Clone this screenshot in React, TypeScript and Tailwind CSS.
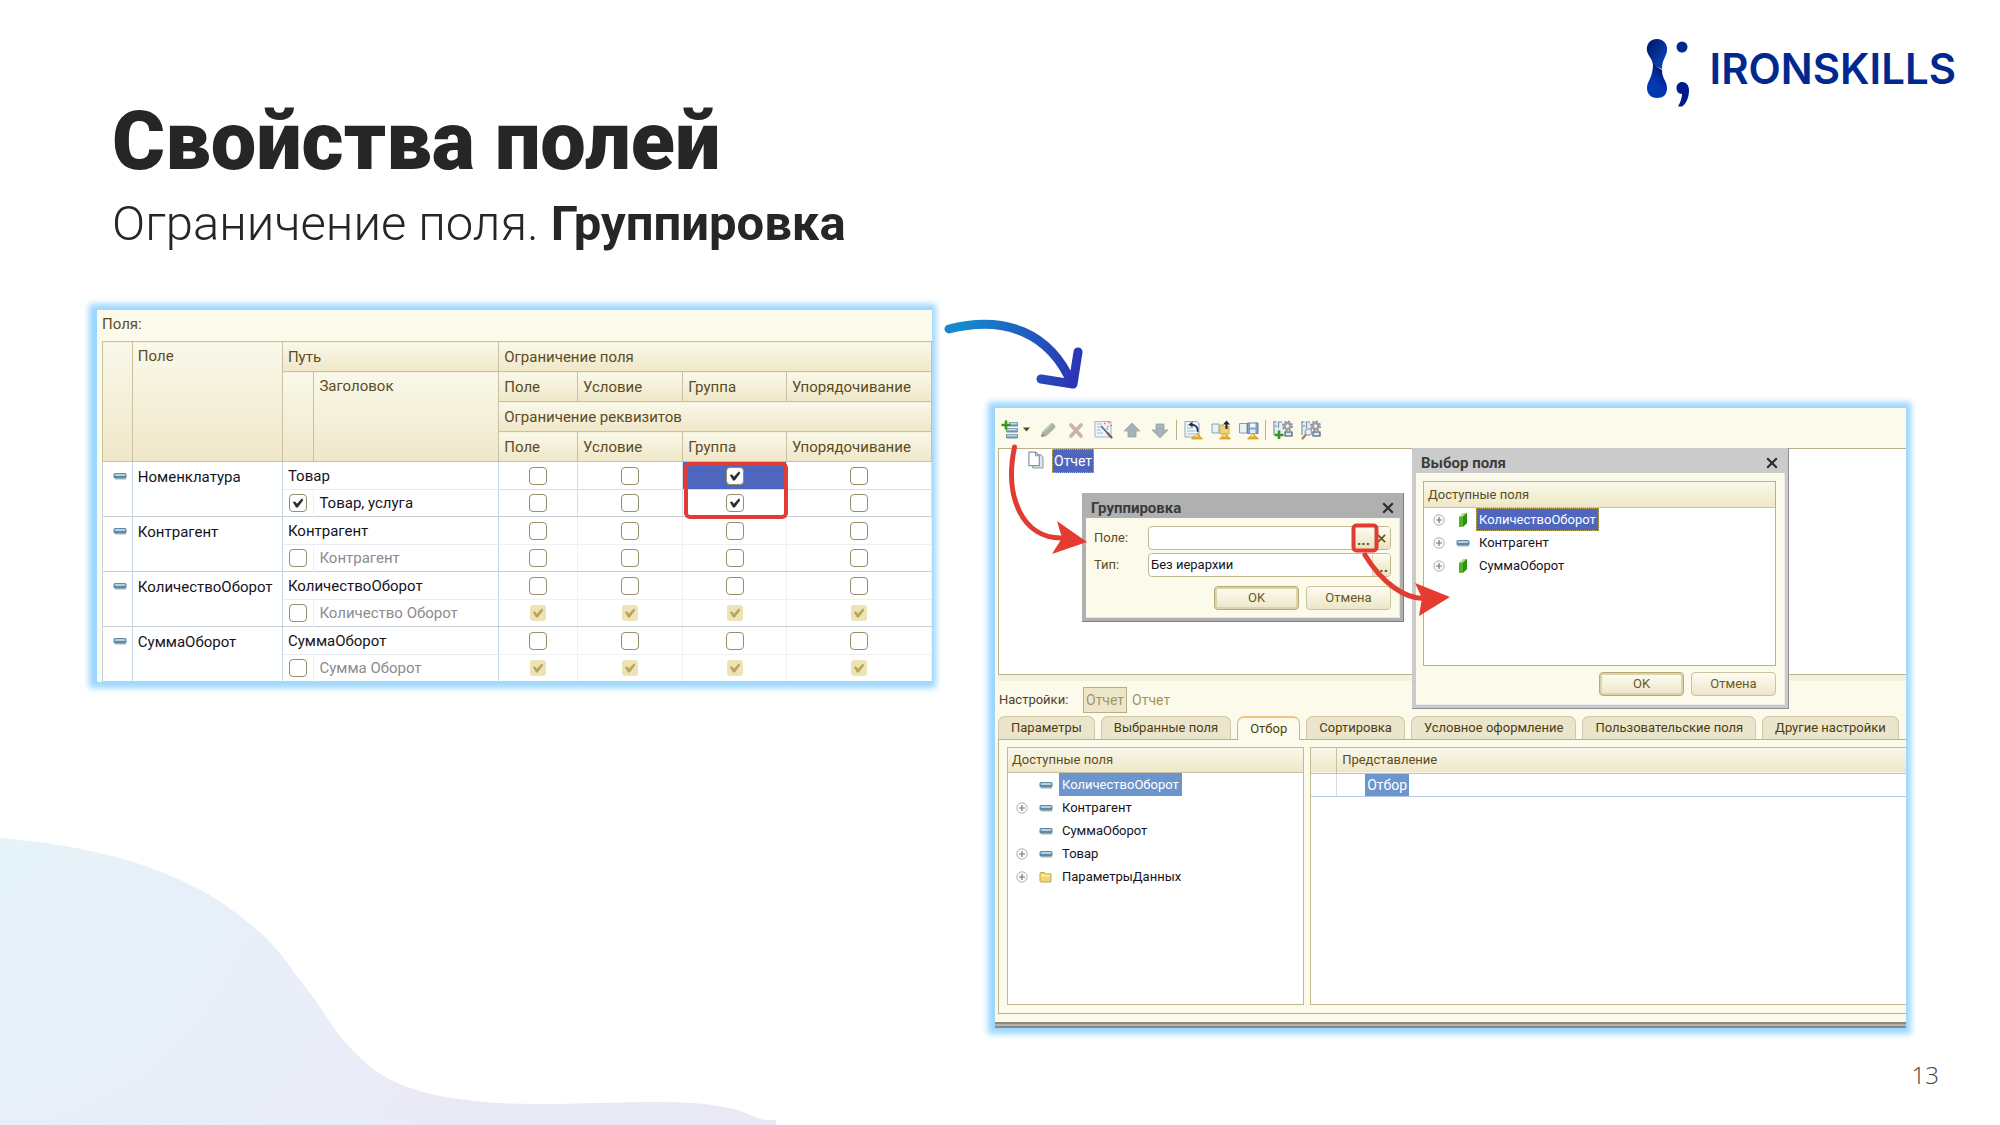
import type { ReactNode } from "react";

const HEAD = "bg-linear-to-b from-[#f9f8ea] to-[#efe7c8]";

/* ---------- small shared pieces ---------- */

function Minus() {
  return (
    <svg viewBox="0 0 14 8" className="h-2 w-3.5 shrink-0" aria-hidden="true">
      <rect x="0.5" y="1" width="13" height="5.5" rx="1.6" fill="#5f8aa6" />
      <rect x="1.6" y="1.9" width="10.8" height="2" rx="1" fill="#b4d0e2" />
      <rect x="2" y="6.4" width="11" height="1" rx="0.5" fill="#47606f" opacity="0.5" />
    </svg>
  );
}

function Resource() {
  return (
    <svg viewBox="0 0 14 16" className="h-4 w-3.5 shrink-0" aria-hidden="true">
      <path d="M3 5 L7 1.5 L11 1 V11 L7 14.8 L3 15 Z" fill="#4fb32a" />
      <path d="M3 5 L7 4.6 L11 1 L7 1.5 Z" fill="#a6e487" />
      <path d="M7 4.6 L11 1 V11 L7 14.8 Z" fill="#2f8f14" />
    </svg>
  );
}

function Folder() {
  return (
    <svg viewBox="0 0 14 12" className="h-3 w-3.5 shrink-0" aria-hidden="true">
      <path d="M1.5 1.5 H5.5 L7 3 H12 V10.5 Q12 11 11.5 11 H2 Q1 11 1 10 V2 Z" fill="#f3d777" stroke="#b99b3e" strokeWidth="0.9" />
      <path d="M2 4.5 H11" stroke="#fdf2bd" strokeWidth="1.2" />
    </svg>
  );
}

function Plus() {
  return (
    <svg viewBox="0 0 12 12" className="size-3 shrink-0" aria-hidden="true">
      <circle cx="6" cy="6" r="5.2" fill="#fbfbfb" stroke="#a9a9a9" strokeWidth="0.9" />
      <path d="M3 6 H9 M6 3 V9" stroke="#777" strokeWidth="1.2" />
    </svg>
  );
}

function Cross({ className }: { className: string }) {
  return (
    <svg viewBox="0 0 12 12" className={className} aria-hidden="true">
      <path d="M1.2 1.2 L10.8 10.8 M10.8 1.2 L1.2 10.8" stroke="currentColor" strokeWidth="2.2" fill="none" />
    </svg>
  );
}

function Check({ state, label }: { state: "off" | "on" | "locked"; label: string }) {
  return (
    <span className="relative inline-grid size-[18px] place-items-center align-middle">
      {state === "locked" ? (
        <input type="checkbox" aria-label={label} defaultChecked disabled className="size-4 appearance-none rounded-[3px] bg-[#eee3b4]" />
      ) : (
        <input
          type="checkbox"
          aria-label={label}
          defaultChecked={state === "on"}
          className="size-[18px] appearance-none rounded-[4px] border border-[#968e6a] bg-white"
        />
      )}
      {state !== "off" && (
        <svg viewBox="0 0 12 12" className="pointer-events-none absolute inset-[3px] size-3" aria-hidden="true">
          <path
            d="M0.8 5 L3 4.400 L5 6.800 L10 1.2 L11.200 3.200 L5.8 10.400 L4 10.400 Z"
            className={state === "on" ? "fill-[#2c2c34]" : "fill-[#b5a55f]"}
          />
        </svg>
      )}
    </span>
  );
}

/* ---------- header ---------- */

function Logo() {
  return (
    <div className="flex items-start gap-5 text-[#00298f]">
      <svg viewBox="0 0 46 70" className="h-[70px] w-[46px]" aria-hidden="true">
        <defs>
          <linearGradient id="logoTop" x1="0" y1="0" x2="1" y2="1">
            <stop offset="0.2" stopColor="#021f78" />
            <stop offset="1" stopColor="#0a4cc4" />
          </linearGradient>
          <linearGradient id="logoBottom" x1="0.8" y1="0" x2="0.3" y2="0.8">
            <stop offset="0" stopColor="#020f6b" />
            <stop offset="0.7" stopColor="#0238b0" />
          </linearGradient>
        </defs>
        <path d="M13 1 C20 1 24 7 23 13 C22 19 18 22 18 31 L9 27 C8 20 4 18 3 13 C2 6 6 1 13 1 Z" fill="url(#logoTop)" />
        <path d="M9 26 L18 32 C18 41 23 43 23 50 C23 57 19 60 13 60 C7 60 3 56 3 50 C3 43 9 40 9 26 Z" fill="url(#logoBottom)" />
        <circle cx="38" cy="9" r="5.5" fill="#00298f" />
        <path d="M38 44 C42 44 45 47 45 52 C45 60 42 66 38 68.500 L34 68.500 C36.500 64 38 60 38 56 C34.500 56 32.500 53 32.500 50 C32.500 46.500 35 44 38 44 Z" fill="#001a8c" />
      </svg>
      <span className="pt-2.5 font-['Inter'] text-[42px] leading-[42px] font-semibold">IRONSKILLS</span>
    </div>
  );
}

/* ---------- left window ---------- */

type State = "off" | "on" | "locked";
const records: { name: string; path: string; title: string; titled: boolean; upper: State[]; lower: State[] }[] = [
  { name: "Номенклатура", path: "Товар", title: "Товар, услуга", titled: true, upper: ["off", "off", "on", "off"], lower: ["off", "off", "on", "off"] },
  { name: "Контрагент", path: "Контрагент", title: "Контрагент", titled: false, upper: ["off", "off", "off", "off"], lower: ["off", "off", "off", "off"] },
  { name: "КоличествоОборот", path: "КоличествоОборот", title: "Количество Оборот", titled: false, upper: ["off", "off", "off", "off"], lower: ["locked", "locked", "locked", "locked"] },
  { name: "СуммаОборот", path: "СуммаОборот", title: "Сумма Оборот", titled: false, upper: ["off", "off", "off", "off"], lower: ["locked", "locked", "locked", "locked"] },
];
const limits = ["Поле", "Условие", "Группа", "Упорядочивание"];

function LimitHeads() {
  return (
    <>
      {limits.map((l) => (
        <th key={l} className={`h-[30px] border border-[#c9c19f] pl-[5px] text-left font-normal whitespace-nowrap ${HEAD}`}>
          {l}
        </th>
      ))}
    </>
  );
}

function FieldsWindow() {
  const head = `h-[30px] border border-[#c9c19f] text-left font-normal ${HEAD}`;
  return (
    <section className="relative bg-[#fcfaea] pl-[5px] text-[15px] leading-5 text-[#5b4c22] shadow-[-2px_0_6px_6px_#9bd7ff]">
      <p className="pt-1 pb-[7px]">Поля:</p>
      <table className="w-full table-fixed border-collapse bg-white">
        <colgroup>
          <col className="w-[3.6%]" />
          <col className="w-[18.100%]" />
          <col className="w-[3.8%]" />
          <col className="w-[22.300%]" />
          <col className="w-[9.500%]" />
          <col className="w-[12.700%]" />
          <col className="w-[12.500%]" />
          <col className="w-[17.500%]" />
        </colgroup>
        <thead>
          <tr>
            <th rowSpan={4} className={head} aria-label="Значок" />
            <th rowSpan={4} className={`${head} pt-1 pl-[5px] align-top`}>Поле</th>
            <th colSpan={2} className={`${head} pl-[5px]`}>Путь</th>
            <th colSpan={4} className={`${head} pl-[5px]`}>Ограничение поля</th>
          </tr>
          <tr>
            <th rowSpan={3} className={head} aria-label="Автозаголовок" />
            <th rowSpan={3} className={`${head} pt-1 pl-[5px] align-top`}>Заголовок</th>
            <LimitHeads />
          </tr>
          <tr>
            <th colSpan={4} className={`${head} pl-[5px]`}>Ограничение реквизитов</th>
          </tr>
          <tr>
            <LimitHeads />
          </tr>
        </thead>
        {records.map((r, i) => (
          <tbody key={r.name} className="border-b border-[#c5ced6] text-[#14141e]">
            <tr>
              <td rowSpan={2} className="h-7 border-x border-[#c5d3e2] pt-2.5 pl-2.5 align-top">
                <Minus />
              </td>
              <td rowSpan={2} className="border-x border-[#c5d3e2] pt-[5px] pl-[5px] align-top">{r.name}</td>
              <td colSpan={2} className="h-7 border-x border-b border-[#c5d3e2] border-b-[#e6ecf2] pl-[5px]">{r.path}</td>
              {r.upper.map((s, k) => (
                <td
                  key={k}
                  className={`h-7 border p-0 text-center leading-none ${i === 0 ? "border-[#cfdff0]" : "border-[#eef0f2]"} ${i === 0 && k === 2 ? "bg-[#4f66bf]" : ""}`}
                >
                  <Check state={s} label={`${r.name}: ${limits[k]}`} />
                </td>
              ))}
            </tr>
            <tr>
              <td className="h-[27px] p-0 text-center leading-none">
                <Check state={r.titled ? "on" : "off"} label={`${r.name}: заголовок`} />
              </td>
              <td className={`border-x border-[#c5d3e2] border-l-[#eef0f2] pl-[5px] whitespace-nowrap ${r.titled ? "" : "text-[#8b8b90]"}`}>{r.title}</td>
              {r.lower.map((s, k) => (
                <td key={k} className={`h-[27px] border p-0 text-center leading-none ${i === 0 ? "border-[#cfdff0]" : "border-[#eef0f2]"} border-b-[#c5ced6]`}>
                  <Check state={s} label={`${r.name}, реквизиты: ${limits[k]}`} />
                </td>
              ))}
            </tr>
          </tbody>
        ))}
      </table>
      <div className="pointer-events-none absolute top-[152px] left-[70.300%] h-[57px] w-[12.500%] rounded-md border-4 border-[#e03c35]" />
    </section>
  );
}

/* ---------- right window ---------- */

function Tool({ label, wide, children }: { label: string; wide?: boolean; children: ReactNode }) {
  return (
    <button type="button" aria-label={label} className={wide ? "h-5 w-[29px]" : "size-5"}>
      {children}
    </button>
  );
}

const svg20 = "size-5";

function Sheet() {
  return (
    <>
      <path d="M2 1.500 H14 L16 3.500 V17 H2 Z" fill="#f4f8fb" stroke="#8fa6b8" strokeWidth="1" />
      <path d="M4 5 H9 M4 8 H10 M4 11 H12 M4 14 H12" stroke="#9fb4c4" strokeWidth="1" />
    </>
  );
}

function Pyramid() {
  return (
    <>
      <path d="M8.500 19 L14 13 L19.500 19 Z" fill="#e3b12c" stroke="#c79017" strokeWidth="0.6" />
      <path d="M11 16.500 L14 13.500 L15 16.500 Z" fill="#f9e08a" />
    </>
  );
}

function Gear() {
  return (
    <g>
      <circle cx="14.500" cy="6" r="4.600" fill="none" stroke="#8b8f98" strokeWidth="1.800" strokeDasharray="2 1.600" />
      <circle cx="14.500" cy="6" r="2.900" fill="none" stroke="#9a9ea6" strokeWidth="2.600" />
      <circle cx="14.500" cy="6" r="1.500" fill="#f2f4f6" />
    </g>
  );
}

function Grid() {
  return (
    <>
      <rect x="0.800" y="1" width="9" height="13" fill="#e6eff6" />
      <path d="M1 1 V15 M5 2 H9 M1 2 H3.500 M5.500 2 V8 M3 5 V7" stroke="#7d94a6" strokeWidth="1.200" fill="none" />
      <rect x="12" y="12" width="7" height="4" fill="#dbe7f1" stroke="#4b6478" strokeWidth="1.200" />
    </>
  );
}

function Toolbar() {
  return (
    <div className="flex h-10 items-center gap-2 pt-1 pl-1.5">
      <Tool label="Добавить" wide>
        <svg viewBox="0 0 29 20" className="h-5 w-[29px]">
          {[2, 8, 14].map((y) => (
            <g key={y}>
              <rect x={y === 2 ? 8 : 5} y={y} width={y === 2 ? 9 : 12} height="4.500" rx="1" fill="#6f93a8" />
              <rect x={y === 2 ? 9 : 6} y={y + 0.8} width={y === 2 ? 7 : 10} height="1.600" rx="0.700" fill="#c4dae6" />
            </g>
          ))}
          <path d="M5 0.500 V9.500 M0.500 5 H9.500" stroke="#2f9a1c" strokeWidth="2.600" />
          <path d="M22 7.500 H29 L25.500 11.500 Z" fill="#5c4520" />
        </svg>
      </Tool>
      <Tool label="Изменить">
        <svg viewBox="0 0 20 20" className={svg20}>
          <path d="M3 17 L4.500 11.500 L12.500 3.500 Q14 2.500 15.500 4 L17 5.500 Q18 7 17 8 L8.500 16 Z" fill="#a9b5a2" />
          <path d="M5 12 L13 4.500" stroke="#c6cec0" strokeWidth="1.500" />
          <path d="M3 17 L4.200 13 L7 16 Z" fill="#8a8f80" />
        </svg>
      </Tool>
      <Tool label="Удалить">
        <svg viewBox="0 0 20 20" className={svg20}>
          <path d="M5 5 L15 16 M15 5 L5 16" stroke="#c9b1ad" strokeWidth="3.600" strokeLinecap="round" />
        </svg>
      </Tool>
      <Tool label="Конструктор">
        <svg viewBox="0 0 20 20" className={svg20}>
          <path d="M1 1.500 H17 V17 H1 Z" fill="#eff5fa" stroke="#a3b7c6" />
          <path d="M3 4 H8 M3 7 H6 M3 10 H7 M3 13 H9" stroke="#a7bac8" />
          <path d="M7 6 L18 18" stroke="#4a6fa0" strokeWidth="1.800" />
          <path d="M13 12.500 L18 18" stroke="#8c5c40" strokeWidth="2" />
          <path d="M10 3.500 H11.500 M14 2.500 H15.500 M13 6.500 H14.500 M16.500 5.500 H18 M12.500 9 H14" stroke="#ec6b5a" strokeWidth="1.500" />
        </svg>
      </Tool>
      <Tool label="Вверх">
        <svg viewBox="0 0 20 20" className={svg20}>
          <path d="M10 3 L18 11 H14 V17 H6 V11 H2 Z" fill="#a6b2b9" stroke="#95a3ab" strokeWidth="0.800" />
        </svg>
      </Tool>
      <Tool label="Вниз">
        <svg viewBox="0 0 20 20" className={svg20}>
          <path d="M10 18 L18 10 H14 V4 H6 V10 H2 Z" fill="#a6b2b9" stroke="#95a3ab" strokeWidth="0.800" />
        </svg>
      </Tool>
      <span className="-mx-0.5 h-5 w-px bg-[#b9b08c]" />
      <Tool label="Вернуть">
        <svg viewBox="0 0 20 20" className={svg20}>
          <Sheet />
          <path d="M14.500 12 C15.500 7 12 4.500 7.500 4.500" stroke="#1f3a54" strokeWidth="1.800" fill="none" />
          <path d="M5.500 4.500 L9.500 1.500 V7.500 Z" fill="#1f3a54" />
          <Pyramid />
        </svg>
      </Tool>
      <Tool label="Загрузить настройки">
        <svg viewBox="0 0 20 20" className={svg20}>
          <path d="M1 4 H8 V13 H1 Z" fill="#eaf2f8" stroke="#86a0b4" />
          <path d="M9 5 H12 L13 6.500 H18 V14 H9 Z" fill="#efd27a" stroke="#c9a23a" strokeWidth="0.800" />
          <path d="M15.500 9 V3.500" stroke="#17293a" strokeWidth="2" fill="none" />
          <path d="M12 4.500 L15.500 0.500 L19 4.500 Z" fill="#17293a" />
          <Pyramid />
        </svg>
      </Tool>
      <Tool label="Сохранить настройки">
        <svg viewBox="0 0 20 20" className={svg20}>
          <path d="M0.500 3.500 H8 V13 H0.500 Z" fill="#eaf2f8" stroke="#86a0b4" />
          <path d="M8.500 3 H19 V13.500 H8.500 Z" fill="#7ea4c4" stroke="#5c83a5" />
          <rect x="11" y="3.500" width="5.500" height="4" fill="#f3f7fa" />
          <rect x="11" y="9.500" width="5.500" height="4" fill="#dfeaf2" />
          <Pyramid />
        </svg>
      </Tool>
      <span className="-mr-px -ml-0.5 h-5 w-px bg-[#b9b08c]" />
      <Tool label="Новая настройка">
        <svg viewBox="0 0 20 20" className={svg20}>
          <Grid />
          <Gear />
          <path d="M6 10.500 V19 M1.500 15 H10.500" stroke="#2f9a1c" strokeWidth="2.600" />
        </svg>
      </Tool>
      <Tool label="Просмотр настройки">
        <svg viewBox="0 0 20 20" className={svg20}>
          <Grid />
          <Gear />
          <path d="M5 14.500 L1.500 18.500" stroke="#b07a55" strokeWidth="2.200" strokeLinecap="round" />
          <circle cx="7.500" cy="12" r="3.200" fill="#e6f0f7" stroke="#9a9ca6" strokeWidth="1.200" />
        </svg>
      </Tool>
    </div>
  );
}

function TreeItem({ icon, text, expandable, mark }: { icon: ReactNode; text: string; expandable: boolean; mark?: string }) {
  return (
    <li className="flex h-[23px] items-center">
      <span className="flex w-3">{expandable && <Plus />}</span>
      <span className="ml-[11px] flex w-3.5 justify-center">{icon}</span>
      <span className={`ml-1.5 flex h-[23px] items-center px-[3px] ${mark ?? "text-[#14141e]"}`}>{text}</span>
    </li>
  );
}

function DialogButtons() {
  const base = "h-6 w-[85px] rounded-[4px] border text-[13px] text-[#6a5a24] bg-linear-to-b from-[#fdfcf1] to-[#ece6c9]";
  return (
    <div className="flex justify-end gap-[7px]">
      <button type="button" className={`${base} border-[#b5a978] shadow-[inset_0_0_0_2px_#ddd3a8]`}>OK</button>
      <button type="button" className={`${base} border-[#c9c19f]`}>Отмена</button>
    </div>
  );
}

function GroupDialog() {
  const field = "flex h-6 min-w-0 flex-1 overflow-hidden rounded-[4px] border border-[#c3ba92] bg-white";
  const small = "grid w-[18px] shrink-0 place-items-center bg-linear-to-b from-[#fdfcf1] to-[#e9e2c2] text-[#6a5216]";
  return (
    <div role="dialog" aria-label="Группировка" className="absolute top-[85px] left-[87px] w-[322px] border-r border-b border-[#7d7d7d] bg-[#b0b0b0] pr-[3px] pb-[3px] pl-1">
      <div className="flex h-[25px] items-center justify-between pt-1 pr-1.5 pl-[5px]">
        <h3 className="text-[15px] font-bold text-[#3b3b3b]">Группировка</h3>
        <button type="button" aria-label="Закрыть" className="text-[#2e2e2e]"><Cross className="size-3" /></button>
      </div>
      <div className="border-r border-b border-[#e4e4e4] bg-[#fcfaea] px-2 pt-2 pb-[7px]">
        <div className="flex items-center">
          <label htmlFor="group-field" className="w-[54px]">Поле:</label>
          <div className={field}>
            <input id="group-field" className="min-w-0 flex-1 px-1 outline-none" />
            <button type="button" aria-label="Выбрать поле" className={`${small} w-5 border-l border-[#ddd6b4] pt-1 text-[15px] font-bold`}>...</button>
            <button type="button" aria-label="Очистить" className={small}><Cross className="size-[9px]" /></button>
          </div>
        </div>
        <div className="mt-[3px] flex items-center">
          <label htmlFor="group-type" className="w-[54px]">Тип:</label>
          <div className={field}>
            <input id="group-type" defaultValue="Без иерархии" className="min-w-0 flex-1 px-0.5 text-[#14141e] outline-none" />
            <button type="button" aria-label="Выбрать тип" className={`${small} border-l border-[#ddd6b4] pt-1 text-[15px] font-bold`}>...</button>
          </div>
        </div>
        <div className="mt-[9px]">
          <DialogButtons />
        </div>
      </div>
    </div>
  );
}

function FieldDialog() {
  return (
    <div role="dialog" aria-label="Выбор поля" className="absolute top-10 left-[417px] w-[377px] border-r border-b border-[#909090] bg-[#cbcbcb] pr-[3px] pb-[3px] pl-1">
      <div className="flex h-[25px] items-center justify-between pt-1 pr-1 pl-[5px]">
        <h3 className="text-[15px] font-bold text-[#3b3b3b]">Выбор поля</h3>
        <button type="button" aria-label="Закрыть" className="mr-[3px] text-[#2e2e2e]"><Cross className="size-3" /></button>
      </div>
      <div className="border-r border-b border-[#ececec] bg-[#fcfaea] pt-2 pr-2 pb-2 pl-[7px]">
        <div className="mb-1.5 h-[185px] border border-[#b9b08c] bg-white">
          <h4 className={`flex h-[26px] items-center border-b border-[#c9c19f] pl-1 ${HEAD}`}>Доступные поля</h4>
          <ul className="pl-[9px]">
            <TreeItem expandable icon={<Resource />} text="КоличествоОборот" mark="border border-dotted border-[#c9b35a] bg-[#4f66bf] !px-0.5 text-white" />
            <TreeItem expandable icon={<Minus />} text="Контрагент" />
            <TreeItem expandable icon={<Resource />} text="СуммаОборот" />
          </ul>
        </div>
        <DialogButtons />
      </div>
    </div>
  );
}

const tabs = ["Параметры", "Выбранные поля", "Отбор", "Сортировка", "Условное оформление", "Пользовательские поля", "Другие настройки"];

function SettingsWindow() {
  return (
    <section className="relative bg-[#fcfaea] text-[13px] leading-4 text-[#5b4c22] shadow-[-1px_0_6px_6px_#9bd7ff]">
      <Toolbar />
      <div className="ml-[3px] h-[227px] border-y border-l border-[#b9b08c] bg-white">
        <div className="flex items-start pl-[29px]">
          <svg viewBox="0 0 17 20" className="mt-0.5 h-[19px] w-4" aria-hidden="true">
            <path d="M5 4 H14 L16 7 V18 H5 Z" fill="#dde6ec" stroke="#8296a4" />
            <path d="M1 1 H8 L12 5 V15.500 H1 Z" fill="#fff" stroke="#8296a4" strokeWidth="1.300" />
            <path d="M8 1 V5 H12" fill="none" stroke="#8296a4" strokeWidth="1.200" />
          </svg>
          <span className="ml-2 border border-dotted border-[#c9b35a] bg-[#4f66bf] px-px py-0.5 text-[14px] leading-[18px] text-white">Отчет</span>
        </div>
      </div>
      <div className="ml-[3px] h-1.5 bg-[#f5f1df]" />
      <div className="flex h-[33px] items-center pt-1 pl-1 text-[#4c4330]">
        <span className="w-[84px]">Настройки:</span>
        <button type="button" className="h-[26px] border border-[#b9ae84] bg-[#ece6cb] px-0.5 text-[14px] text-[#a39662]">Отчет</button>
        <span className="ml-[5px] text-[14px] text-[#a39662]">Отчет</span>
      </div>
      <div role="tablist" className="ml-[3px] flex gap-1.5 pt-[2px]">
        {tabs.map((t) => (
          <button
            key={t}
            type="button"
            role="tab"
            aria-selected={t === "Отбор"}
            className={
              t === "Отбор"
                ? "relative -mb-px h-6 rounded-t-[7px] border border-t-2 border-b-0 border-[#c3ba92] border-t-[#f0c67c] bg-[#fcfaea] px-3 whitespace-nowrap text-[#4c3d12]"
                : "h-[23px] rounded-t-[7px] border border-b-0 border-[#cfc7a5] bg-[#ebe5cb] px-3 whitespace-nowrap text-[#4c3d12]"
            }
          >
            {t}
          </button>
        ))}
      </div>
      <div className="ml-[3px] grid h-[275px] grid-cols-[297fr_597fr] gap-1.5 border-y border-l border-[#b9b08c] pt-[7px] pb-2 pl-2">
        <div className="border border-[#c3ba92] bg-white">
          <h4 className={`flex h-[25px] items-center border-b border-[#c9c19f] pl-1 ${HEAD}`}>Доступные поля</h4>
          <ul className="pl-2">
            <TreeItem expandable={false} icon={<Minus />} text="КоличествоОборот" mark="bg-[#6d95cd] text-white" />
            <TreeItem expandable icon={<Minus />} text="Контрагент" />
            <TreeItem expandable={false} icon={<Minus />} text="СуммаОборот" />
            <TreeItem expandable icon={<Minus />} text="Товар" />
            <TreeItem expandable icon={<Folder />} text="ПараметрыДанных" />
          </ul>
        </div>
        <div className="border border-r-0 border-[#c3ba92] bg-white">
          <table className="w-full table-fixed border-collapse">
            <thead>
              <tr className={`h-[25px] border-b border-[#c9c19f] ${HEAD}`}>
                <th className="w-[26px] border-r border-[#c9c19f]" aria-label="Использование" />
                <th className="pl-[5px] text-left font-normal">Представление</th>
              </tr>
            </thead>
            <tbody>
              <tr className="h-[22px] border-b border-[#b4c9e0]">
                <td className="border-r border-[#cfdff0]" />
                <td className="py-0 pl-7">
                  <span className="block w-fit bg-[#6d95cd] px-0.5 text-[14px] leading-[22px] text-white">Отбор</span>
                </td>
              </tr>
            </tbody>
          </table>
        </div>
      </div>
      <div className="h-2" />
      <div className="h-1.5 border-y-2 border-[#8b8a80] bg-[#b3b3b3]" />
      <GroupDialog />
      <FieldDialog />
      <svg viewBox="0 0 911 618" className="pointer-events-none absolute top-0 left-0 h-[618px] w-[911px]" aria-hidden="true">
        <g fill="none" stroke="#e03c31" strokeWidth="5" strokeLinecap="round">
          <path d="M19.500 39 C9 90 28 130 66 130" />
          <path d="M370 147 C385 172 410 194 435 190" />
        </g>
        <rect x="358.500" y="117.500" width="23" height="25" rx="3" fill="none" stroke="#e03c31" strokeWidth="4" />
        <path d="M92 134 L62 113 L67 130 L57 146 Z M455 189 L420 175 L427 190 L424 208 Z" fill="#e53b30" />
      </svg>
    </section>
  );
}

/* ---------- slide ---------- */

export default function App() {
  return (
    <main className="relative flex min-h-screen flex-col overflow-hidden bg-white font-['Roboto',sans-serif] text-[#262626]">
      <svg viewBox="0 0 780 290" className="pointer-events-none absolute bottom-0 left-0 w-[39%]" aria-hidden="true">
        <defs>
          <radialGradient id="wave" gradientUnits="userSpaceOnUse" cx="-20" cy="10" r="560">
            <stop offset="0" stopColor="#e5f3f7" />
            <stop offset="0.350" stopColor="#e7f0f9" />
            <stop offset="0.700" stopColor="#e9edf7" />
            <stop offset="1" stopColor="#e9e9f5" />
          </radialGradient>
        </defs>
        <path
          d="M0 3 C60 8 115 19 153 34 C180 44 204 55 225 70 C248 87 268 101 286 126 C299 145 313 160 326 181 C338 200 352 217 372 233 C395 251 428 260 459 264 C485 268 510 269 535 269 C580 269 620 267 658 267 C700 267 725 271 740 276 C752 280 756 284 765 285 L776 285 V290 H0 Z"
          fill="url(#wave)"
        />
      </svg>

      <header className="relative flex items-start justify-between pt-[38px] pr-11 pl-28">
        <div className="pt-16">
          <h1 className="text-[81px] leading-[80px] font-black">Свойства полей</h1>
          <p className="mt-[17px] text-[49px] leading-[49px] font-light">
            Ограничение поля. <strong className="font-bold">Группировка</strong>
          </p>
        </div>
        <Logo />
      </header>

      <div className="relative mt-[62px] grid grid-cols-[835fr_911fr] items-start gap-[63px] pr-[94px] pl-[97px]">
        <FieldsWindow />
        <div className="relative pt-[98px]">
          <SettingsWindow />
          <svg viewBox="0 0 150 80" className="pointer-events-none absolute top-2 -left-[53px] h-20 w-[150px]" aria-hidden="true">
            <defs>
              <linearGradient id="swoop" gradientUnits="userSpaceOnUse" x1="5" y1="10" x2="135" y2="50">
                <stop offset="0.100" stopColor="#1589cc" />
                <stop offset="1" stopColor="#2b35b5" />
              </linearGradient>
            </defs>
            <path d="M7 11 C62 -3 108 14 130 66 M99 61 L131 66 L136 34" fill="none" stroke="url(#swoop)" strokeWidth="9" strokeLinecap="round" strokeLinejoin="round" />
          </svg>
        </div>
      </div>

      <footer className="relative mt-auto pr-[61px] pb-[38px] text-right font-['Open_Sans'] text-2xl leading-6 font-light text-[#444]">13</footer>
    </main>
  );
}
